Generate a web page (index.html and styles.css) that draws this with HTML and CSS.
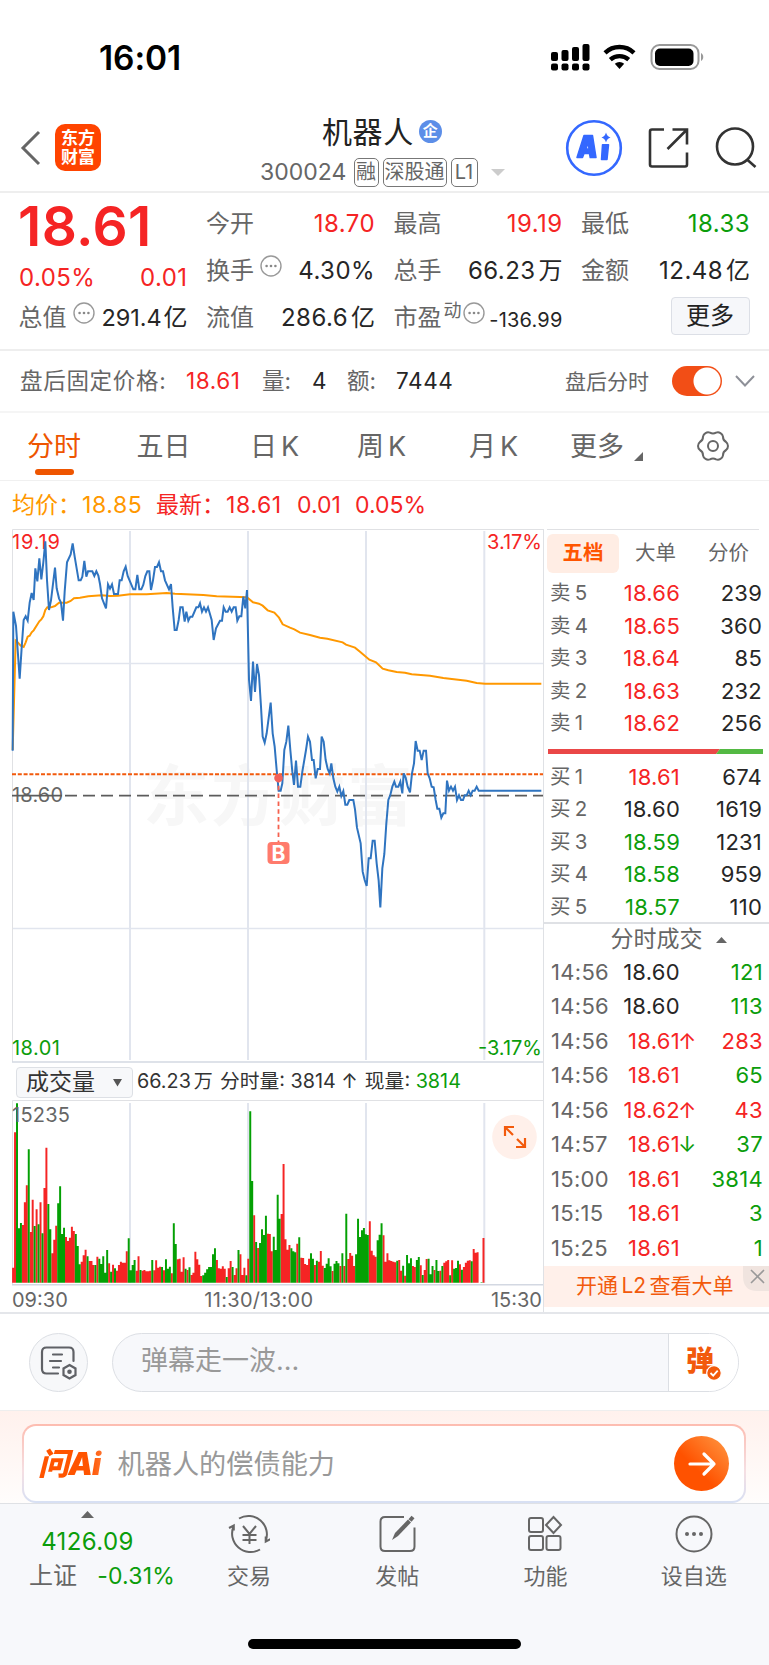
FILE: index.html
```html
<!DOCTYPE html>
<html lang="zh-CN">
<head>
<meta charset="utf-8">
<title>机器人 300024</title>
<link rel="stylesheet" href="styles.css">
</head>
<body>
<svg class="defs" width="0" height="0">
  <symbol id="more" viewBox="0 0 22 22"><circle cx="11" cy="11" r="10" fill="none" stroke="#999" stroke-width="1.4"/><g fill="#888"><circle cx="6.6" cy="11" r="1.3"/><circle cx="11" cy="11" r="1.3"/><circle cx="15.4" cy="11" r="1.3"/></g></symbol>
</svg>

<div class="status">
  <span class="clock">16:01</span>
  <svg class="status-icons" width="156" height="28" viewBox="550 43 156 28">
    <g fill="#000">
      <rect x="551" y="52" width="7" height="9" rx="2"/><rect x="561.500" y="50" width="7" height="11" rx="2"/><rect x="572" y="47" width="7" height="14" rx="2"/><rect x="582.500" y="44" width="7" height="17" rx="2"/>
      <rect x="551" y="63.500" width="7" height="7" rx="2"/><rect x="561.500" y="63.500" width="7" height="7" rx="2"/><rect x="572" y="63.500" width="7" height="7" rx="2"/><rect x="582.500" y="63.500" width="7" height="7" rx="2"/>
      <path d="M614.800 63.800a7 7 0 0 1 9.400 0l-4.700 5.200z"/>
    </g>
    <g fill="none" stroke="#000" stroke-width="4.400"><path d="M605 52.800a21 21 0 0 1 29 0"/><path d="M610.300 59.600a14 14 0 0 1 18.400 0"/></g>
    <rect x="651.500" y="45" width="47" height="24" rx="8" fill="none" stroke="#999" stroke-width="2"/>
    <rect x="655" y="48.500" width="38.500" height="17.500" rx="5" fill="#000"/>
    <path d="M701 53c3 1.500 3 6.500 0 8z" fill="#999"/>
  </svg>
</div>

<header class="header">
  <svg class="back" width="22" height="36" viewBox="0 0 22 36"><path d="M19 2L3 18l16 16" fill="none" stroke="#666" stroke-width="3"/></svg>
  <div class="logo"><span>东方</span><span>财富</span></div>
  <div class="title">
    <div class="name">机器人<span class="badge">企</span></div>
    <div class="code"><span>300024</span><i>融</i><i class="wide">深股通</i><i class="level">L1</i><b class="down"></b></div>
  </div>
  <div class="actions">
    <svg width="58" height="58" viewBox="565 119 58 58"><circle cx="594" cy="148" r="26.800" fill="none" stroke="#3468ff" stroke-width="2.600"/><path d="M577 157.500l7-22h8.500l3.500 22h-5.800l-.7-4h-5.500l-1.500 4zM586 149h3l-.8-6.500z" fill="#3468ff" fill-rule="evenodd" stroke="#3468ff" stroke-width="1.500" stroke-linejoin="round"/><path d="M602.500 144.800h6l-1.500 14.700h-5.500z" fill="#3468ff" stroke="#3468ff" stroke-width="1.500" stroke-linejoin="round"/><path d="M606 132.500q1 4 4.500 5-3.500 1-4.500 5-1-4-4.500-5 3.500-1 4.500-5z" fill="#3468ff"/></svg>
    <svg width="42" height="42" viewBox="648 127 42 42" fill="none" stroke="#333" stroke-width="2.600"><path d="M664 129.500h-12q-2 0-2 2v33q0 2 2 2h33q2 0 2-2v-12"/><path d="M672.500 129.500h14.500v15M686.500 130l-19 19"/></svg>
    <svg width="44" height="44" viewBox="714 126 44 44" fill="none" stroke="#333" stroke-width="2.600"><circle cx="735" cy="146.500" r="18"/><path d="M747 159.500l8.500 7.500"/></svg>
  </div>
</header>

<section class="quote">
  <div class="price">18.61</div>
  <div class="cell r"><label>今开</label><span>18.70</span></div>
  <div class="cell r"><label>最高</label><span>19.19</span></div>
  <div class="cell g"><label>最低</label><span>18.33</span></div>
  <div class="cell r change"><span>0.05%</span><span>0.01</span></div>
  <div class="cell"><label>换手<svg class="info"><use href="#more"/></svg></label><span>4.30%</span></div>
  <div class="cell"><label>总手</label><span>66.23<em>万</em></span></div>
  <div class="cell"><label>金额</label><span>12.48<em>亿</em></span></div>
  <div class="cell tight"><label>总值<svg class="info"><use href="#more"/></svg></label><span>291.4<em>亿</em></span></div>
  <div class="cell"><label>流值</label><span>286.6<em>亿</em></span></div>
  <div class="cell pe"><label>市盈<sup>动</sup><svg class="info"><use href="#more"/></svg></label><span>-136.99</span></div>
  <div class="cell end"><button class="morebtn">更多</button></div>
</section>

<section class="after">
  <label class="w1">盘后固定价格:</label><span class="w2 red">18.61</span><label class="w3">量:</label><span class="w4">4</span><label class="w5">额:</label><span class="w6">7444</span>
  <label class="w7">盘后分时</label><span class="toggle"></span>
  <svg class="chev" width="20" height="12" viewBox="0 0 20 12"><path d="M1 1l9 9.500L19 1" fill="none" stroke="#8e9098" stroke-width="2"/></svg>
</section>

<nav class="tabs">
  <span class="active">分时</span><span>五日</span><span>日<u>K</u></span><span>周<u>K</u></span><span>月<u>K</u></span><span class="moretab">更多<svg width="9" height="9"><path d="M9 0v9H0z" fill="#666"/></svg></span>
  <svg class="gear" width="34" height="34" viewBox="-17 -17 34 34" fill="none" stroke="#666" stroke-width="2"><path d="M13.100-4A5.200 5.200 0 0 1 13.100 4A6 6 0 0 0 10 9.350A5.200 5.200 0 0 1 3.080 13.350A6 6 0 0 0-3.080 13.350A5.200 5.200 0 0 1-10 9.350A6 6 0 0 0-13.100 4A5.200 5.200 0 0 1-13.100-4A6 6 0 0 0-10-9.350A5.200 5.200 0 0 1-3.080-13.350A6 6 0 0 0 3.080-13.350A5.200 5.200 0 0 1 10-9.350A6 6 0 0 0 13.100-4z"/><circle r="5"/></svg>
</nav>

<div class="avg"><span class="orange">均价：</span><span class="orange a2">18.85</span><span class="a3">最新：</span><span class="a4">18.61</span><span class="a5">0.01</span><span>0.05%</span></div>

<main class="board">
  <div class="charts">
    <svg class="plot" width="543" height="534" viewBox="0 529 543 534">
      <text x="143" y="820" class="mark" textLength="270">东方财富</text>
      <g stroke="#e1e5ee" stroke-width="2"><path d="M130 531v529M248 531v529M366 531v529M484.300 531v529"/><path d="M12 663.500h532M12 928.500h532" stroke-width="1.500"/></g>
      <path d="M12.500 1062V529.500H544" fill="none" stroke="#e0e1e4"/>
      <path d="M12 1062h532" stroke="#d3d8e2" stroke-width="1.500"/>
      <text x="12" y="549" class="r" textLength="48">19.19</text>
      <text x="542" y="549" class="r" text-anchor="end" textLength="55">3.17%</text>
      <text x="12" y="1055" class="g" textLength="48">18.01</text>
      <text x="542" y="1055" class="g" text-anchor="end" textLength="64">-3.17%</text>
      <text x="12" y="802" class="mid" textLength="51">18.60</text>
      <path d="M12 774.300h532" stroke="#f25a0c" stroke-width="2" stroke-dasharray="4 1.800"/>
      <path d="M65 795.700h479" stroke="#5c5c5c" stroke-width="1.800" stroke-dasharray="12 6"/>
      <path d="M12 795.700h50" stroke="#5c5c5c" stroke-width="1.800"/>
      <g fill="none" stroke-width="6" stroke-linejoin="miter">
        <g transform="translate(0 520) scale(.33333)">
          <path stroke="#ff9800" d="M38 690L47 362 54 368 62 377 71 381 77 367 83 350 89 347 95 337 101 331 118 304 124 298 130 289 136 270 142 262 153 262 165 258 177 248 200 248 212 243 222 235 240 233 265 229 305 226 330 228 354 227 390 223 440 223 500 219 525 221 610 225 650 229 720 231 742 232"/>
          <path stroke="#2f74c0" d="M38 692L40 275 48 318 59 476 65 383 71 300 77 289 83 302 89 248 95 219 101 240 106 145 112 184 118 115 124 178 130 127 136 64 141 180 147 270 153 241 165 143 170 205 177 235 183 248 189 302 194 215 201 127 212 103 218 70 224 110 236 181 242 181 247 170 253 123 259 170 264 154 277 154 283 168 289 154 295 167 300 192 306 235 318 265 324 193 330 206 336 193 342 222 354 222 359 181 365 181 371 154 377 140 383 168 400 208 406 208 412 165 418 208 424 208 430 194 436 168 442 154 448 154 453 210 459 181 465 141 471 141 477 127 483 154 489 154 495 181 507 208 513 192 518 262 524 330 530 330 536 300 541 262 548 262 554 305 559 275 565 302 571 290 577 290 589 262 595 262 600 250 606 275 612 262 618 275 624 262 635 300 641 360 648 325 660 302 666 302 671 262 677 275 683 275 689 262 695 275 701 262 707 262 712 302 718 289 724 289 730 230 736 265 741 210"/>
        </g>
        <g transform="translate(240 560) scale(.33333)">
          <path stroke="#ff9800" d="M20 111L39 127 57 131 68 137 83 151 103 158 117 173 128 193 150 203 163 208 180 218 210 225 240 233 262 236 308 247 318 254 345 263 360 275 388 299 408 307 428 326 445 331 470 336 495 338 515 343 570 347 610 354 680 362 710 369 735 371 904 371"/>
          <path stroke="#2f74c0" d="M21 90L27 358 33 423 39 305 45 396 51 312 57 345 63 440 68 530 74 548 80 520 92 428 98 520 104 560 110 630 116 692 122 692 127 670 133 570 139 545 145 497 151 570 157 635 162 675 168 602 174 680 181 680 187 635 198 570 204 530 210 545 216 600 221 600 227 655 233 627 240 627 245 530 251 545 257 600 263 627 269 640 274 610 280 655 286 680 292 695 298 680 304 708 310 693 316 734 322 734 328 720 340 720 345 748 351 803 362 850 368 935 374 960 380 978 386 895 392 895 398 842 404 842 410 910 416 962 421 1042 427 925 433 882 439 790 445 720 451 705 457 680 463 665 468 680 475 680 481 665 487 700 491 640 497 653 503 680 510 697 516 640 522 610 527 543 533 572 539 572 545 600 551 572 558 572 563 640 569 655 575 680 581 682 587 720 592 746 598 746 604 773 610 760 616 760 621 662 627 692 633 680 639 692 645 680 651 720 657 706 663 720 669 720 674 706 680 706 686 692 692 706 698 692 704 692 710 680 716 692 904 692"/>
        </g>
      </g>
      <path d="M278.500 778v64" stroke="#f5624f" stroke-width="1.800" stroke-dasharray="4.500 3.300"/>
      <circle cx="278.500" cy="778" r="4.300" fill="#f26058"/>
      <rect x="267.500" y="842" width="22" height="22" rx="4" fill="#ff7b6c"/>
      <text x="278.500" y="860.500" class="buy" text-anchor="middle">B</text>
    </svg>
    <div class="volhead"><span class="select">成交量<svg width="9" height="9"><path d="M0 1h9L4.500 8.500z" fill="#555"/></svg></span><span>66.23<em>万</em></span><span class="v2">分时量: 3814 ↑</span><span class="v3">现量: <b>3814</b></span></div>
    <svg class="plot" width="543" height="186" viewBox="0 1100 543 186">
      <path d="M12.500 1284V1100.500H544" fill="none" stroke="#e0e1e4"/>
      <path d="M130 1103v180M248 1103v180M366 1103v180M484.300 1103v180" stroke="#e1e5ee" stroke-width="2"/>
      <path d="M12 1284.700h532" stroke="#d3d8e2" stroke-width="1.500"/>
      <g id="bars"></g>
      <text x="12" y="1122" class="t" textLength="58">15235</text>
      <circle cx="514.500" cy="1137" r="22.300" fill="#fff0ea"/>
      <g fill="none" stroke="#f25a0c" stroke-width="2.200"><path d="M505 1136v-9h9M505 1127l8 8"/><path d="M525 1138v9h-9M525 1147l-8-8"/></g>
    </svg>
    <div class="times"><span>09:30</span><span>11:30/13:00</span><span>15:30</span></div>
  </div>

  <aside class="book">
    <div class="booktabs"><span class="on">五档</span><span>大单</span><span>分价</span></div>
    <div class="levels">
      <div><label>卖 5</label><span class="r">18.66</span><b>239</b></div>
      <div><label>卖 4</label><span class="r">18.65</span><b>360</b></div>
      <div><label>卖 3</label><span class="r">18.64</span><b>85</b></div>
      <div><label>卖 2</label><span class="r">18.63</span><b>232</b></div>
      <div><label>卖 1</label><span class="r">18.62</span><b>256</b></div>
    </div>
    <svg class="ratio" width="215" height="5"><path d="M0 0h172l-4 5H0z" fill="#ea4747"/><path d="M172 0h43v5h-47z" fill="#54b943"/></svg>
    <div class="levels bids">
      <div><label>买 1</label><span class="r">18.61</span><b>674</b></div>
      <div><label>买 2</label><span>18.60</span><b>1619</b></div>
      <div><label>买 3</label><span class="g">18.59</span><b>1231</b></div>
      <div><label>买 4</label><span class="g">18.58</span><b>959</b></div>
      <div><label>买 5</label><span class="g">18.57</span><b>110</b></div>
    </div>
    <div class="tradehead">分时成交<svg width="11" height="6"><path d="M0 6L5.500 0 11 6z" fill="#666"/></svg></div>
    <div class="trades">
      <div><label>14:56</label><span>18.60</span><s></s><b class="g">121</b></div>
      <div><label>14:56</label><span>18.60</span><s></s><b class="g">113</b></div>
      <div><label>14:56</label><span class="r">18.61</span><s class="r">↑</s><b class="r">283</b></div>
      <div><label>14:56</label><span class="r">18.61</span><s></s><b class="g">65</b></div>
      <div><label>14:56</label><span class="r">18.62</span><s class="r">↑</s><b class="r">43</b></div>
      <div><label>14:57</label><span class="r">18.61</span><s class="g">↓</s><b class="g">37</b></div>
      <div><label>15:00</label><span class="r">18.61</span><s></s><b class="g">3814</b></div>
      <div><label>15:15</label><span class="r">18.61</span><s></s><b class="g">3</b></div>
      <div><label>15:25</label><span class="r">18.61</span><s></s><b class="g">1</b></div>
    </div>
    <div class="promo"><span>开通 L2 查看大单</span><svg class="close" width="26" height="25"><path d="M0 0h26v25H14Q0 25 0 10z" fill="#f0e4df"/><path d="M8 4l13 13M21 4L8 17" stroke="#999" stroke-width="1.600"/></svg></div>
  </aside>
</main>

<section class="danmu">
  <span class="round"><svg width="40" height="36" viewBox="40 1345 40 36" fill="none" stroke="#5f6166" stroke-width="2.200" stroke-linecap="round"><path d="M74.500 1361v-9q0-4.500-4.500-4.500H47.500q-4.500 0-4.500 4.500v17q0 4.500 4.500 4.500H59M54 1354.500h9M51 1361h11M54 1367.500h6"/><path d="M70.500 1365l6 3.500v6.500l-6 3.500-6-3.500v-6.500z"/><circle cx="70.500" cy="1371.800" r="1.200"/></svg></span>
  <div class="field"><span>弹幕走一波...</span><div class="send"><span>弹</span><svg width="16" height="16" viewBox="-1 -1 16 16"><circle cx="7" cy="7" r="7.300" fill="#f25a0c" stroke="#fff" stroke-width="1.200"/><path d="M3.500 7l2.700 2.700 4.500-5" fill="none" stroke="#fff" stroke-width="1.800"/></svg></div></div>
</section>

<section class="ask">
  <div class="card"><span class="ailogo">问Ai</span><span class="question">机器人的偿债能力</span>
    <span class="go"><svg width="30" height="30" fill="none" stroke="#fff" stroke-width="3.200" stroke-linecap="round" stroke-linejoin="round"><path d="M3 15h24M17 5l10 10-10 10"/></svg></span></div>
</section>

<footer class="dock">
  <div class="items">
    <div class="index"><svg width="13" height="7"><path d="M0 7L6.500 0 13 7z" fill="#666"/></svg><span class="g">4126.09</span><p><label>上证</label><span class="g">-0.31%</span></p></div>
    <div class="item"><svg viewBox="228 1513 42 42"><path d="M239 1518.500a18.500 18.500 0 0 1 26.500 23M260 1549.500a18.500 18.500 0 0 1-26.500-23M229 1528l4.800-2.500 0 5M270.500 1539l-4.800 2.500 0-5"/><path d="M243 1526l6.500 8 6.500-8M242.500 1535h14M242.500 1540h14M249.500 1534v10"/></svg><span>交易</span></div>
    <div class="item"><svg viewBox="377 1513 42 42"><path d="M405 1517h-19q-4.500 0-4.500 4.500v25q0 4.500 4.500 4.500h25q4.500 0 4.500-4.500v-19"/><path d="M393 1540l3-7 13-13.500 3 3-13 13.500z" fill="#666" stroke="none"/><path d="M411 1520.500l3-3.500" stroke-width="4"/></svg><span>发帖</span></div>
    <div class="item"><svg viewBox="525.500 1513 42 42"><rect x="530.500" y="1518" width="14" height="14" rx="2"/><rect x="530.500" y="1536" width="14" height="14" rx="2"/><rect x="548" y="1536" width="14" height="14" rx="2"/><path d="M555 1517l7.500 8-7.500 8-7.500-8z"/></svg><span>功能</span></div>
    <div class="item"><svg viewBox="673 1513 42 42"><circle cx="694" cy="1534" r="17.500"/><g fill="#666" stroke="none"><circle cx="687" cy="1534" r="2"/><circle cx="694" cy="1534" r="2"/><circle cx="701" cy="1534" r="2"/></g></svg><span>设自选</span></div>
  </div>
  <div class="home"></div>
</footer>
<script src="bars.js"></script>
</body>
</html>
```

FILE: styles.css
```css
* { box-sizing: border-box; }
body { margin: 0; width: 769px; background: #fff; color: #262626; font-family: Inter, "Noto Sans CJK SC", sans-serif; font-size: 23px; line-height: 1; }
svg { display: block; flex: none; }
i, em, s, u, b { font-style: normal; text-decoration: none; font-weight: 400; }
label { color: #666; }
.r, .red { color: #f52424; fill: #f52424; }
.g { color: #0b9d0b; fill: #0b9d0b; }
.defs { position: absolute; }

.status { height: 110px; display: flex; justify-content: space-between; padding: 0 63px 0 99px; }
.clock { font-size: 33.500px; font-weight: 600; line-height: 117px; letter-spacing: -.1px; color: #000; }
.status-icons { margin-top: 43px; }

.header { height: 83px; border-bottom: 2px solid #eee; display: flex; padding-left: 20px; }
.back { margin-top: 20px; }
.logo { width: 46px; height: 47px; margin: 14px 0 0 13px; border-radius: 10px; background: #ff4400; color: #fff; display: flex; flex-direction: column; align-items: center; justify-content: center; font-size: 17px; font-weight: 700; line-height: 18.500px; }
.title { width: 246px; margin-left: 159px; }
.name { display: flex; align-items: center; padding-left: 62px; height: 43px; font-size: 30px; letter-spacing: .6px; color: #222; }
.badge { width: 23px; height: 23px; margin-left: 5px; border-radius: 50%; background: #5c8ee8; color: #fff; font-size: 15px; font-weight: 700; line-height: 22px; text-align: center; letter-spacing: 0; }
.code { display: flex; align-items: center; height: 39px; color: #666; }
.code span { width: 93.500px; }
.code i { height: 29px; width: 25px; margin-right: 4px; border: 1.500px solid #777; border-radius: 5px; font-size: 20px; line-height: 26px; text-align: center; white-space: nowrap; }
.code .wide { width: 64px; }
.code .level { width: 27px; margin-right: 13px; }
.down { border: 7px solid transparent; border-top-color: #ccc; border-bottom: 0; }
.actions { display: flex; align-items: center; margin-left: 59px; height: 76px; }
.actions svg + svg { margin-left: 24.500px; }

.quote { height: 158px; border-bottom: 2px solid #eee; padding: 7px 0 0 19px; display: grid; grid-template-columns: 168px 168px 168px 168px; column-gap: 19.500px; grid-template-rows: 47px 47px 47px; }
.price { font-size: 55px; font-weight: 600; letter-spacing: .4px; line-height: 53px; color: #f52424; margin-left: -1px; }
.cell { display: flex; align-items: center; justify-content: space-between; font-size: 24px; white-space: nowrap; letter-spacing: .45px; }
.cell > span { margin-right: -.5px; }
.cell label { display: flex; align-items: center; letter-spacing: 0; color: #666; margin-left: -.5px; }
.cell em { margin-left: 3px; font-size: 24px; letter-spacing: 0; }
.change { padding-top: 14px; }
.info { width: 22px; height: 22px; margin: 0 0 10px 6px; }
.tight span { font-size: 23.500px; letter-spacing: -.1px; }
.tight em { margin-left: 2px; }
.pe sup { font-size: 18px; line-height: 18px; margin: 0 0 14px 2px; }
.pe .info { margin-left: 1px; }
.pe span { font-size: 20px; padding-top: 4px; letter-spacing: .2px; }
.end { justify-content: flex-end; }
.morebtn { width: 79px; height: 38px; padding: 0; margin-top: -4px; border: 1.500px solid #dcdfe6; border-radius: 4px; background: #f6f7fa; font: 24px/34px Inter, "Noto Sans CJK SC", sans-serif; color: #222; }

.after { height: 62px; border-bottom: 2px solid #f5f5f5; display: flex; align-items: center; padding-left: 20px; font-size: 22.500px; white-space: nowrap; }
.w1 { width: 166px; } .w2 { width: 76px; } .w3 { width: 50px; } .w4 { width: 35px; } .w5 { width: 49px; } .w6 { width: 169px; } .w7 { width: 107px; font-size: 21px; }
.after .w1 { letter-spacing: .7px; }
.w2, .w6 { letter-spacing: .6px; }
.toggle { width: 50px; height: 30px; border-radius: 15px; background: radial-gradient(circle at 35px 15px, #fff 13px, transparent 14px), #f24e16; }
.chev { margin-left: 12.500px; }

.tabs { height: 68px; border-bottom: 1.500px solid #f0f0f0; display: flex; align-items: center; padding-left: 27px; font-size: 27px; color: #666; }
.tabs > span { height: 66px; line-height: 66px; white-space: nowrap; display: flex; }
.tabs > span:nth-child(1) { width: 109.500px; }
.tabs > span:nth-child(2) { width: 113.500px; }
.tabs > span:nth-child(3) { width: 107px; }
.tabs > span:nth-child(4) { width: 112px; }
.tabs > span:nth-child(5) { width: 101px; }
.tabs u { margin-left: 4px; }
.tabs .active { color: #ee5500; position: relative; }
.tabs .active::after { content: ""; position: absolute; left: 8px; top: 55px; width: 39px; height: 6px; border-radius: 3px; background: #ee5500; }
.moretab { width: 126px; align-items: center; }
.moretab svg { margin: 20px 0 0 10px; }
.gear { margin-top: -2px; }

.avg { height: 48px; display: flex; align-items: center; padding-left: 12px; font-size: 23px; color: #f52424; white-space: nowrap; }
.avg .orange { color: #ff9800; }
.avg > span:first-child { width: 70px; }
.a2 { width: 74px; } .a3 { width: 70px; } .a4 { width: 71px; } .a5 { width: 58px; }
.a2, .a4 { letter-spacing: .6px; }

.board { height: 785px; display: flex; border-bottom: 2px solid #e4e6ea; }
.charts { width: 543px; flex: none; }
.plot text { font-size: 20px; }
.plot .mark { font-size: 66px; font-weight: 700; fill: #f7f7f7; }
.plot .mid, .plot .t { fill: #666; }
.plot .buy { font-size: 21px; font-weight: 700; fill: #fff; }
.volhead { height: 37px; display: flex; align-items: center; padding: 1px 0 0 16px; font-size: 19.800px; color: #333; white-space: nowrap; }
.select { width: 117px; height: 31px; margin-right: 4px; border: 1.500px solid #dde0e5; border-radius: 4px; background: #f7f8fa; display: flex; align-items: center; padding-left: 9px; font-size: 23px; }
.select svg { margin-left: 18px; }
.volhead em { margin-left: 3px; font-size: 19px; }
.v2 { margin-left: 7px; } .v3 { margin-left: 7px; }
.v3 b { color: #0b9d0b; }
.times { height: 27px; display: flex; justify-content: space-between; align-items: center; padding: 1px 1px 0 12px; font-size: 20px; color: #666; }
.times span:nth-child(2) { margin-right: 41px; letter-spacing: .3px; }

.book { width: 226px; border-left: 1.500px solid #dfe1e5; }
.booktabs { height: 48px; margin-left: 3px; border-top: 1px solid #e0e1e4; width: 212px; display: flex; padding-top: 4px; font-size: 20.500px; color: #666; line-height: 38px; text-align: center; }
.booktabs span { width: 73px; flex: none; }
.booktabs .on { width: 72px; height: 39px; border-radius: 6px; background: #ffede4; color: #ff5500; font-weight: 700; }
.levels > div { height: 32.500px; display: grid; grid-template-columns: 60px 70px 82px; align-items: center; padding-left: 6px; font-size: 22px; letter-spacing: .2px; }
.levels label { font-size: 20.500px; word-spacing: -2px; }
.levels span, .levels b, .trades span, .trades b { text-align: right; }
.ratio { margin: 9px 0 7px 3.500px; }
.tradehead { height: 33px; margin-top: -1px; border-top: 2px solid #dfe1e5; display: flex; align-items: center; justify-content: center; padding-left: 24px; font-size: 23px; color: #666; }
.tradehead svg { margin-left: 13px; }
.trades > div { height: 34.500px; display: grid; grid-template-columns: 62px 67px 18px 65px; align-items: center; padding: 0 0 1px 7px; font-size: 22px; letter-spacing: .3px; }
.trades s { font-size: 22px; margin-left: -2px; }
.promo { height: 41px; background: #fff0ea; color: #f25a0c; display: flex; font-size: 21px; line-height: 40px; justify-content: space-between; padding-left: 32px; white-space: nowrap; word-spacing: -2.500px; }

.danmu { height: 96px; display: flex; padding: 19px 0 0 29px; }
.round { width: 59px; height: 59px; border: 1.500px solid #dcdfe4; border-radius: 50%; background: #f7f8fa; display: grid; place-items: center; }
.field { width: 627px; height: 59px; margin-left: 24px; border: 1.500px solid #dcdfe4; border-radius: 30px; background: #f7f8fb; display: flex; justify-content: space-between; overflow: hidden; padding-left: 28px; font-size: 27px; line-height: 54px; color: #999; }
.send { width: 70px; border-left: 1.500px solid #dcdfe4; background: #fff; display: flex; padding-left: 17px; }
.send span { color: #f25a0c; font-weight: 900; font-size: 28px; }
.send svg { margin: 31px 0 0 -8px; }

.ask { height: 93px; border-top: 1px solid #eee; background: linear-gradient(#fff1ed, #fffdfc); padding: 13px 0 0 22px; }
.card { width: 724px; height: 79px; border: 2.500px solid transparent; border-radius: 14px; background: linear-gradient(#fff, #fff) padding-box, linear-gradient(#fdbcb0, #f5dfe3 60%, #d7e0f4) border-box; display: flex; align-items: center; padding: 0 15px 0 14px; }
.ailogo { width: 79.500px; font-size: 31px; font-weight: 900; font-style: italic; letter-spacing: -.8px; color: transparent; background: linear-gradient(90deg, #ff5400 65%, #ff9a66) text; line-height: 42px; }
.question { flex: 1; font-size: 27.200px; color: #999; padding-top: 2px; }
.go { width: 55px; height: 55px; border-radius: 50%; background: linear-gradient(45deg, #ff5200 40%, #ff9a45); display: grid; place-items: center; }

.dock { height: 162px; border-top: 1.500px solid #dfe1e5; background: #f7f8fb; }
.items { height: 135px; display: flex; color: #666; }
.index { width: 175px; display: flex; flex-direction: column; align-items: center; padding-top: 7px; font-size: 24px; }
.index > span { margin-top: 12px; letter-spacing: .4px; }
.index p { margin: 10px 0 0; padding-left: 29px; width: 175px; display: flex; align-items: center; }
.index label { width: 69px; font-size: 24px; }
.index p span { font-size: 23px; letter-spacing: .2px; }
.item { width: 148.200px; display: flex; flex-direction: column; align-items: center; padding-top: 9px; font-size: 22px; }
.item svg { width: 42px; height: 42px; fill: none; stroke: #666; stroke-width: 2; }
.item span { margin-top: 10px; }
.home { width: 273px; height: 10px; margin-left: 248px; border-radius: 5px; background: #000; }
```

FILE: bars.js
```js
// One entry per minute: bar top in thirds of a pixel, then colour.
const data = "683r 277r 190g 565g 549g 555r 487r 436r 328g 576r 479r 558g 508r 553g 487r 580g 444r 323r 492g 568g 640r 599r 557r 490g 439g 582g 563g 591r 603r 593r 560r 573r 582g 618g 673g 665r 646r 629r 649g 663r 663r 675r 675g 650r 656g 672g 649g 698g 630g 670r 695g 674r 685g 692r 675r 665r 668r 668r 634r 595g 691g 675g 660g 692r 649r 690g 692r 690r 694r 694r 692r 660g 691r 661r 683r 680r 681g 691r 658g 686g 680g 700r 550g 612g 658r 656r 695r 652r 686g 690r 682g 705r 698r 635r 658r 674r 708r 706g 698g 688g 681g 681g 643g 625g 660r 685r 686r 679r 686r 711g 685r 663r 681g 705r 685r 630g 643r 705r 683r 706g 656r 214g 423g 526r 606g 624r 609g 568g 585g 527g 581r 582r 634r 590g 630g 464g 536g 522r 372r 598r 629r 615r 625g 634g 637g 611r 592g 653r 654r 672r 675r 656r 640g 656g 675r 662g 665r 633r 677r 684g 671g 655g 679g 693r 671g 663g 670g 678r 640g 678r 521g 657r 639r 647r 678r 643g 536g 591g 571g 564g 583g 585g 544r 632r 646r 650r 601g 584g 550g 586r 665r 640r 661r 663r 665r 667r 662g 660r 692r 677g 707r 645g 670g 655g 678r 681r 660g 651g 676r 705g 690r 657r 656g 703g 678g 690r 660g 693g 692r 678g 668r 664r 660r 706g 661r 686g 684g 662g 673r 689g 681r 668r 662r 661r 664g 627r 638r 637r 728r 727g 594r".split(" ");
const paths = { r: "", g: "" };
data.forEach((entry, i) => {
  const top = 1040 + parseInt(entry, 10) / 3;
  const height = 1282.7 - top;
  if (height > 0) paths[entry.slice(-1)] += `M${(12.1 + i * 1.96).toFixed(2)} ${top.toFixed(1)}h1.97v${height.toFixed(1)}h-1.97z`;
});
document.getElementById("bars").innerHTML =
  `<path d="${paths.r}" fill="#f52424"/><path d="${paths.g}" fill="#04a004"/>`;
```
